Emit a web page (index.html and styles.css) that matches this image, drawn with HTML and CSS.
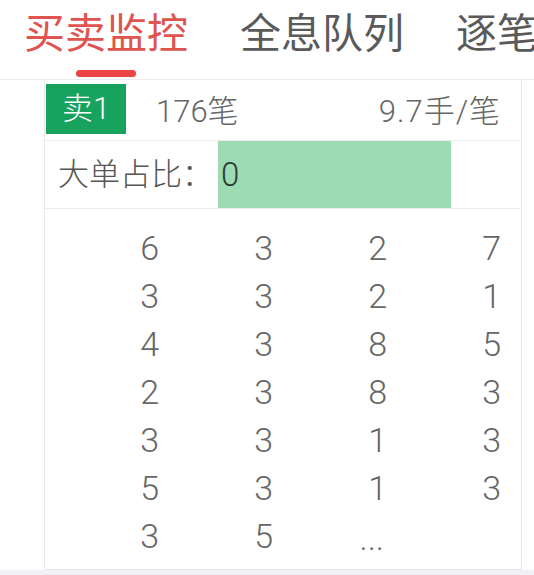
FILE: index.html
```html
<html>
	<head>
	<meta charset="utf-8">
	<link rel="stylesheet" href="styles.css">
	</head>
	<body>
		<div class="page">
			<div class="tabs">
				<div class="tab active">
					<span class="tab-text">买卖监控</span>
					<span class="tab-bar"></span>
				</div>
				<div class="tab">
					<span class="tab-text">全息队列</span>
				</div>
				<div class="tab">
					<span class="tab-text">逐笔成交</span>
				</div>
			</div>

			<div class="panel">
				<div class="row-head">
					<div class="badge">卖1</div>
					<div class="count">176笔</div>
					<div class="ratio">9.7手/笔</div>
				</div>
				<div class="row-big">
					<div class="big-label">大单占比：</div>
					<div class="big-bar">0</div>
				</div>
				<div class="queue">
					<span>6</span><span>3</span><span>2</span><span>7</span>
					<span>3</span><span>3</span><span>2</span><span>1</span>
					<span>4</span><span>3</span><span>8</span><span>5</span>
					<span>2</span><span>3</span><span>8</span><span>3</span>
					<span>3</span><span>3</span><span>1</span><span>3</span>
					<span>5</span><span>3</span><span>1</span><span>3</span>
					<span>3</span><span>5</span><span class="more">...</span>
				</div>
			</div>
		</div>
	</body>
</html>
```

FILE: styles.css
```css
*{
	margin: 0px;
	padding: 0px;
	box-sizing: border-box;
}
body{
	background: #f2f2f6;
	font-family: Roboto, "Noto Sans CJK SC", sans-serif;
	font-weight: 300;
	color: #666666;
	width: 534px;
	height: 575px;
	overflow: hidden;
}
.page{
	background: white;
	height: 570px;
}

/* tabs */
.tabs{
	display: flex;
	gap: 52px;
	height: 80px;
	padding-left: 24px;
	border-bottom: 1px solid #ebebeb;
	overflow: hidden;
	white-space: nowrap;
}
.tab{
	display: flex;
	flex-direction: column;
	align-items: center;
	padding-top: 10px;
	flex-shrink: 0;
}
.tab-text{
	font-family: "Noto Sans CJK SC", sans-serif;
	font-weight: 400;
	font-size: 41px;
	line-height: 41px;
	color: #5a5a5a;
}
.tab.active .tab-text{
	color: #e0544f;
}
.tab-bar{
	display: block;
	width: 60px;
	height: 7px;
	margin-top: 19px;
	border-radius: 4px;
	background: #ea4444;
}

/* panel */
.panel{
	width: 478px;
	margin-left: 44px;
	border: 1px solid #e8e8e8;
	border-top: none;
	height: 490px;
}
.row-head{
	display: flex;
	align-items: center;
	height: 61px;
	padding: 3px 20px 6px 1px;
	border-bottom: 1px solid #ebebeb;
}
.badge{
	width: 80px;
	height: 50px;
	background: #17a25d;
	color: white;
	font-size: 31px;
	line-height: 50px;
	text-align: center;
}
.count{
	margin-left: 30px;
	font-size: 31px;
}
.ratio{
	margin-left: auto;
	font-size: 31px;
	letter-spacing: 1px;
}
.row-big{
	display: flex;
	height: 68px;
	border-bottom: 1px solid #ebebeb;
}
.big-label{
	width: 173px;
	padding-left: 13px;
	font-size: 31px;
	line-height: 67px;
	color: #555555;
}
.big-bar{
	width: 233px;
	background: #9cdbb4;
	padding-left: 3px;
	font-size: 33px;
	line-height: 67px;
	color: #2b3d31;
}
.queue{
	display: grid;
	grid-template-columns: repeat(4, 114px);
	grid-auto-rows: 48px;
	padding-top: 15px;
	font-size: 34px;
	line-height: 48px;
	color: #666666;
}
.queue span{
	text-align: right;
}
.queue .more{
	padding-right: 3px;
	line-height: 52px;
}
```
